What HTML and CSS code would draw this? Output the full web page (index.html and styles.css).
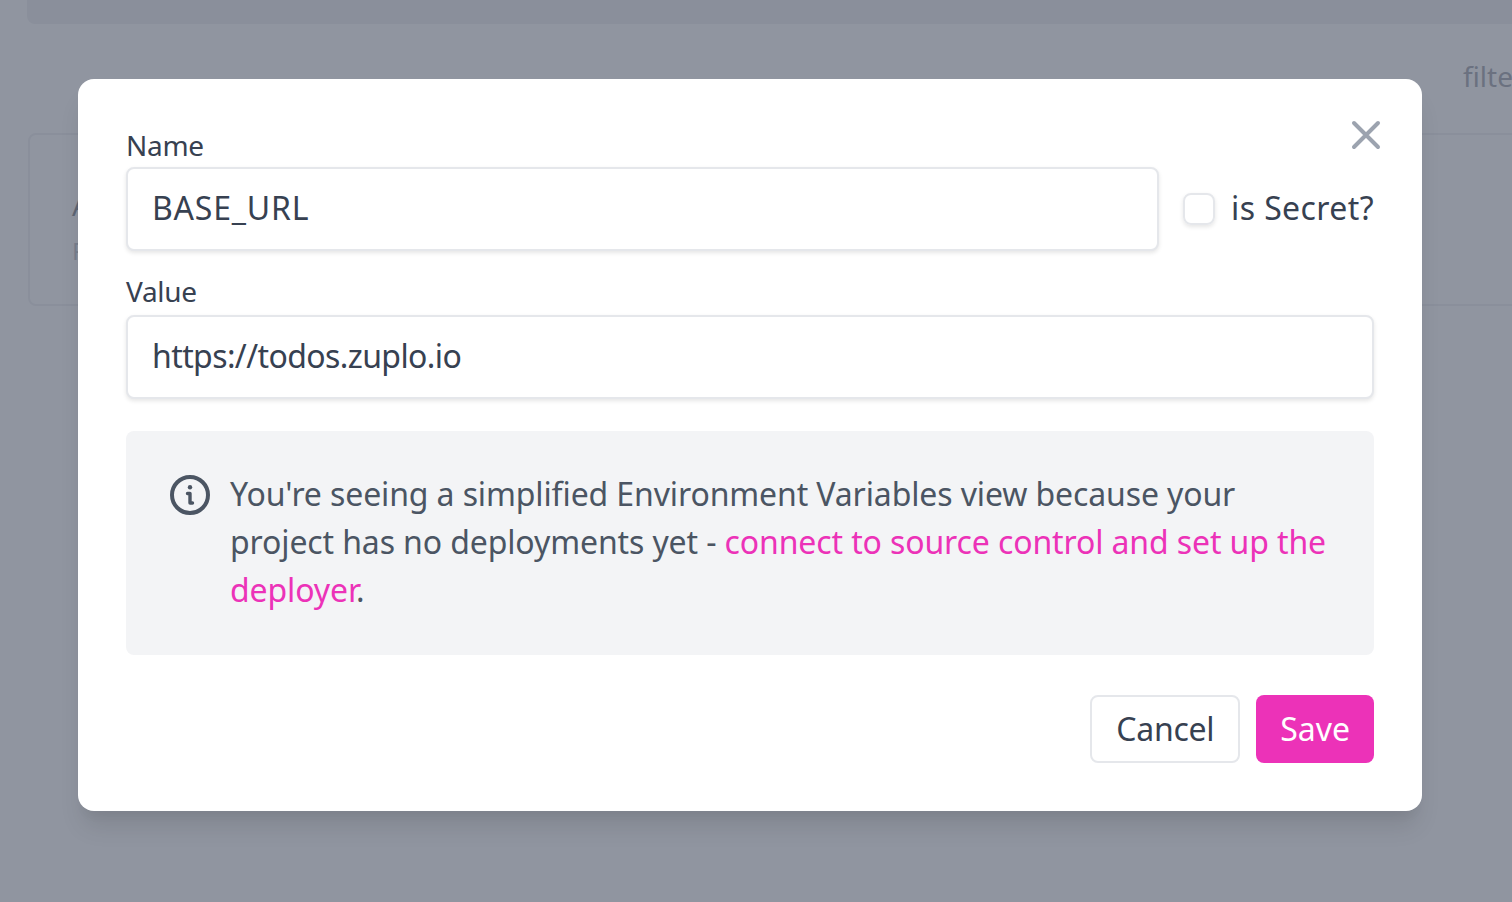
FILE: index.html
```html
<!DOCTYPE html>
<html lang="en">
<head>
  <meta charset="UTF-8">
  <meta name="viewport" content="width=device-width, initial-scale=1.0">
  <title>Environment Variables</title>
  <link rel="stylesheet" href="styles.css">
</head>
<body>
  <div class="page">
    <div class="top-bar"></div>
    <div class="filter-row">filter</div>
    <div class="var-card">
      <div class="var-title">API</div>
      <div class="var-sub">Production</div>
    </div>
  </div>

  <div class="overlay">
    <div class="modal">
      <button class="close" type="button" aria-label="Close">
        <svg viewBox="0 0 32 32" width="32" height="32" fill="none" stroke="currentColor" stroke-width="4" stroke-linecap="round">
          <path d="M4 4 28 28M28 4 4 28"/>
        </svg>
      </button>

      <label class="field-label" for="name">Name</label>
      <div class="name-row">
        <input class="text-input name-input" type="text" id="name" value="BASE_URL">
        <label class="secret">
          <span class="checkbox"></span>
          <span class="secret-text">is Secret?</span>
        </label>
      </div>

      <label class="field-label value-label" for="value">Value</label>
      <input class="text-input value-input" type="text" id="value" value="https://todos.zuplo.io">

      <div class="notice">
        <svg class="notice-icon" viewBox="0 0 40 40" width="40" height="40" fill="none" stroke="currentColor" stroke-width="4" stroke-linecap="round" stroke-linejoin="round">
          <circle cx="20" cy="20" r="18"/>
          <path d="M17.500 18.500H20V28H22.500" stroke-width="3.400"/>
          <path d="M20 12.200V12.300" stroke-width="4.400"/>
        </svg>
        <p>You're seeing a simplified Environment Variables view because your project has no deployments yet - <a href="#">connect to source control and set up the deployer</a>.</p>
      </div>

      <div class="actions">
        <button class="btn btn-cancel" type="button">Cancel</button>
        <button class="btn btn-save" type="button">Save</button>
      </div>
    </div>
  </div>
</body>
</html>
```

FILE: styles.css
```css
* {
  box-sizing: border-box;
}

html, body {
  height: 100%;
}

body {
  margin: 0;
  overflow: hidden;
  background-color: #fff;
  font-family: "Noto Sans", Arial, sans-serif;
  color: #374151;
}

.page {
  padding-left: 27px;
  width: 1600px;
}

.top-bar {
  height: 24px;
  background-color: #e5e7eb;
  border-radius: 0 0 8px 8px;
}

.filter-row {
  height: 109px;
  padding: 33px 0 0 1436px;
  font-size: 28px;
  line-height: 38px;
  color: #6b7280;
}

.var-card {
  height: 173px;
  margin-left: 1px;
  padding: 50px 42px;
  border: 2px solid #e5e7eb;
  border-radius: 8px;
}

.var-title {
  font-size: 28px;
  line-height: 40px;
  color: #374151;
}

.var-sub {
  margin-top: 6px;
  font-size: 24px;
  line-height: 40px;
  color: #9ca3af;
}

.overlay {
  position: absolute;
  inset: 0;
  padding: 79px 90px 0 78px;
  background-color: rgba(107, 114, 128, 0.75);
}

.modal {
  position: relative;
  height: 732px;
  padding: 48px;
  background-color: #fff;
  border-radius: 16px;
  box-shadow: 0 20px 25px -5px rgba(0, 0, 0, 0.1), 0 10px 10px -5px rgba(0, 0, 0, 0.04);
}

.close {
  position: absolute;
  top: 40px;
  right: 40px;
  width: 32px;
  height: 32px;
  padding: 0;
  border: none;
  background: none;
  color: #9ca3af;
}

.close svg {
  display: block;
}

.field-label {
  display: block;
  height: 40px;
  font-size: 28px;
  line-height: 36px;
  letter-spacing: -0.3px;
  color: #374151;
}

.value-label {
  height: 42px;
  margin-top: 22px;
}

.name-row {
  display: flex;
  align-items: center;
  gap: 24px;
}

.text-input {
  display: block;
  width: 100%;
  height: 84px;
  padding: 0 24px 4px;
  border: 2px solid #e5e7eb;
  border-radius: 8px;
  box-shadow: 0 2px 4px rgba(0, 0, 0, 0.1);
  background-color: #fff;
  font-family: inherit;
  font-size: 32px;
  color: #374151;
}

.name-input {
  flex: 1;
  min-width: 0;
  letter-spacing: 0.8px;
}

.value-input {
  letter-spacing: -0.6px;
}

.secret {
  display: flex;
  align-items: center;
  gap: 16px;
  font-size: 32px;
  letter-spacing: 0.4px;
  color: #374151;
}

.secret-text {
  margin-bottom: 4px;
}

.checkbox {
  width: 32px;
  height: 32px;
  border: 2px solid #e5e7eb;
  border-radius: 8px;
  box-shadow: 0 2px 4px rgba(0, 0, 0, 0.1);
}

.notice {
  display: flex;
  gap: 20px;
  height: 224px;
  margin-top: 32px;
  padding: 39px 44px;
  background-color: #f3f4f6;
  border-radius: 8px;
  color: #4b5563;
}

.notice-icon {
  flex: none;
  margin-top: 5px;
}

.notice p {
  margin: 0;
  font-size: 32px;
  line-height: 48px;
  letter-spacing: -0.12px;
}

.notice a {
  color: #ec32b8;
  text-decoration: none;
}

.actions {
  display: flex;
  justify-content: flex-end;
  gap: 16px;
  margin-top: 40px;
}

.btn {
  height: 68px;
  padding: 0 24px 2px;
  border-radius: 8px;
  font-family: inherit;
  font-size: 32px;
}

.btn-cancel {
  border: 2px solid #e5e7eb;
  background-color: #fff;
  letter-spacing: -0.3px;
  color: #374151;
}

.btn-save {
  border: none;
  background-color: #ec32b8;
  color: #fff;
}
```
